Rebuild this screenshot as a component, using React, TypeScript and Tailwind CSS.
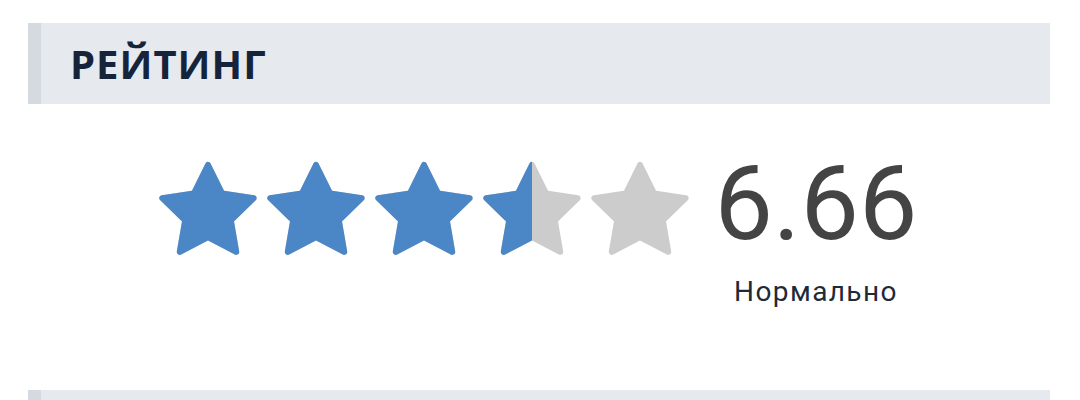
import React from "react";

const BLUE = "#4b86c6";
const GRAY = "#cccccc";

// rounded five-point star, drawn as a stroked polygon so the tips come out soft
function starPoints() {
  const cx = 49;
  const cy = 53;
  const R = 48;
  const r = 24;
  const pts: string[] = [];
  for (let i = 0; i < 10; i++) {
    const rad = i % 2 === 0 ? R : r;
    const a = (Math.PI / 5) * i - Math.PI / 2;
    pts.push(`${(cx + rad * Math.cos(a)).toFixed(2)},${(cy + rad * Math.sin(a)).toFixed(2)}`);
  }
  return pts.join(" ");
}

const POINTS = starPoints();

function Star({ fill, id }: { fill: number; id: string }) {
  return (
    <svg width="98" height="96" viewBox="0 0 98 96" className="block shrink-0">
      <defs>
        <clipPath id={id}>
          <rect x="0" y="0" width={98 * fill} height="96" />
        </clipPath>
      </defs>
      <polygon points={POINTS} fill={GRAY} stroke={GRAY} strokeWidth="6" strokeLinejoin="round" />
      {fill > 0 && (
        <polygon
          points={POINTS}
          fill={BLUE}
          stroke={BLUE}
          strokeWidth="6"
          strokeLinejoin="round"
          clipPath={`url(#${id})`}
        />
      )}
    </svg>
  );
}

export default function App() {
  const fills = [1, 1, 1, 0.5, 0];

  return (
    <div className="w-[1080px] h-[400px] overflow-hidden bg-white pt-[23px] pl-[28px] pr-[30px]">
      <div className="h-[81px] flex items-center bg-[#e6e9ee] border-l-[13px] border-[#d5dae1] pl-[29px]">
        <h2
          className="text-[40px] font-bold leading-none tracking-[0.025em] text-[#15243a]"
          style={{ fontFamily: '"Open Sans", sans-serif' }}>
          РЕЙТИНГ
        </h2>
      </div>

      <div className="h-[286px] flex justify-center items-start pt-[48px] pr-[2px] gap-[26px]">
        <div className="flex gap-[10px] mt-[8px]">
          {fills.map((f, i) => (
            <Star key={i} fill={f} id={`star-clip-${i}`} />
          ))}
        </div>
        <div className="flex flex-col items-center" style={{ fontFamily: "Roboto, sans-serif" }}>
          <span className="text-[104px] leading-none h-[104px] text-[#444444]">6.66</span>
          <span className="mt-[22px] text-[28px] leading-none tracking-[0.05em] text-[#1e2a38]">Нормально</span>
        </div>
      </div>

      <div className="h-[81px] bg-[#e6e9ee] border-l-[13px] border-[#d5dae1]" />
    </div>
  );
}
